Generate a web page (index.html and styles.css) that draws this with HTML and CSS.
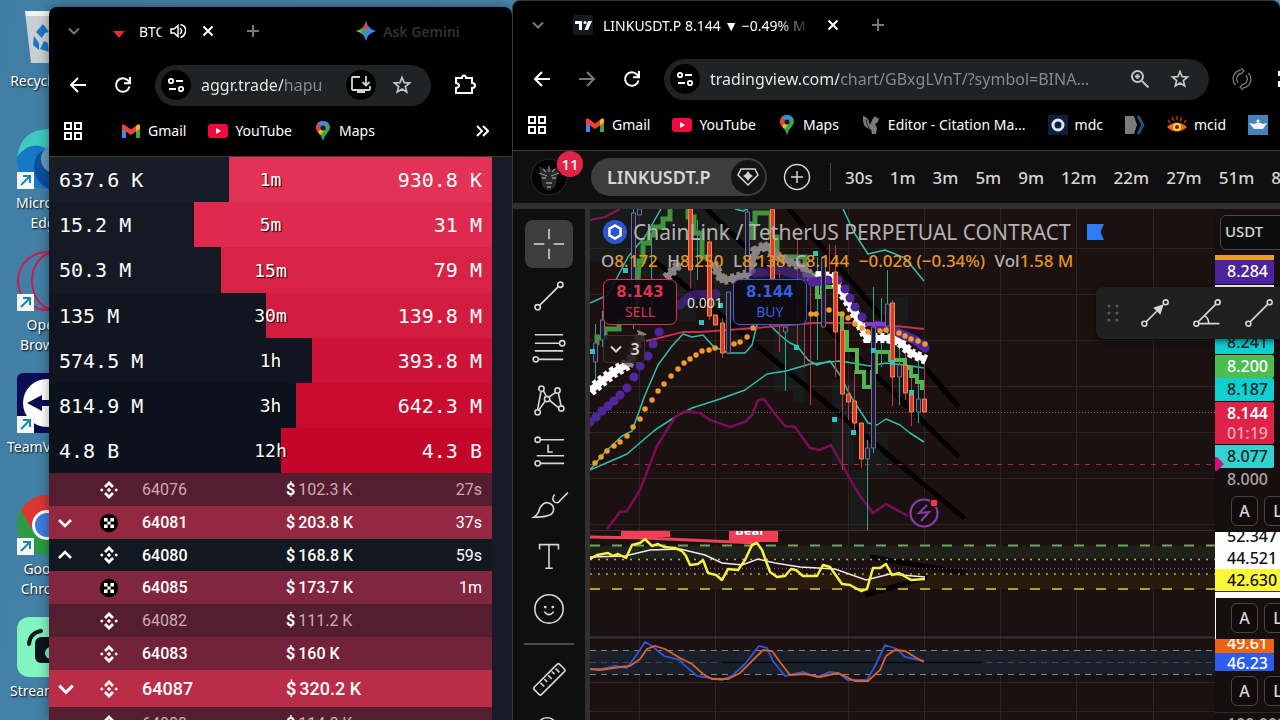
FILE: index.html
```html
<!DOCTYPE html>
<html lang="en">
<head>
<meta charset="utf-8">
<title>Desktop</title>
<link rel="stylesheet" href="styles.css">
</head>
<body>
<svg class="defs" aria-hidden="true">
  <symbol id="chev" viewBox="0 0 16 16"><path d="M3 5.500l5 5 5-5" fill="none" stroke="currentColor" stroke-width="2"/></symbol>
  <symbol id="chev-bold" viewBox="0 0 16 16"><path d="M2 5l6 6 6-6" fill="none" stroke="currentColor" stroke-width="2.600"/></symbol>
  <symbol id="x" viewBox="0 0 16 16"><path d="M3.500 3.500l9 9M12.500 3.500l-9 9" stroke="currentColor" stroke-width="2"/></symbol>
  <symbol id="plus" viewBox="0 0 16 16"><path d="M8 2v12M2 8h12" stroke="currentColor" stroke-width="2"/></symbol>
  <symbol id="back" viewBox="0 0 18 18"><path d="M17 9H3M9 2L2 9l7 7" fill="none" stroke="currentColor" stroke-width="2"/></symbol>
  <symbol id="reload" viewBox="0 0 18 18"><path d="M15.500 10.500A6.800 6.800 0 1 1 14 4.500L16 7M16 1v6.200H10" fill="none" stroke="currentColor" stroke-width="2"/></symbol>
  <symbol id="tune" viewBox="0 0 18 18"><g fill="none" stroke="currentColor" stroke-width="1.800"><circle cx="4" cy="5" r="2.200"/><path d="M9 5h7M2 13h7"/><circle cx="14" cy="13" r="2.200"/></g></symbol>
  <symbol id="star" viewBox="0 0 20 20"><path d="M10 2.500l2.100 5.100 5.500.4-4.200 3.600 1.300 5.400L10 14.100 5.300 17l1.300-5.400L2.400 8l5.500-.4z" fill="none" stroke="currentColor" stroke-width="1.700"/></symbol>
  <symbol id="apps" viewBox="0 0 20 20"><path d="M2 2h6v6H2zM12 2h6v6h-6zM2 12h6v6H2zM12 12h6v6h-6z" fill="none" stroke="currentColor" stroke-width="2"/></symbol>
  <symbol id="gmail" viewBox="0 0 20 16"><path d="M1 3v12h4V6z" fill="#4285f4"/><path d="M15 6v9h4V3z" fill="#34a853"/><path d="M1 3v3l9 6 9-6V3q0-3-3-1l-6 4.500L4 2Q1 0 1 3z" fill="#ea4335"/><path d="M15 3v5.500l4-3V3q-1-3-4 0z" fill="#fbbc04"/></symbol>
  <symbol id="yt" viewBox="0 0 20 16"><rect y="1" width="20" height="14" rx="3" fill="#f0093e"/><path d="M8 5v6l5-3z" fill="#fff"/></symbol>
  <symbol id="maps" viewBox="0 0 14 20"><path d="M7 20Q6 15 2 11 0 9 0 7 0 0 7 0q7 0 7 7 0 2-2 4-4 4-5 9z" fill="#34a853"/><path d="M0 7q0-3 2-5l4 4-4 5Q0 9 0 7z" fill="#ea4335"/><path d="M2 2q5-4 10 0L8 6z" fill="#4285f4"/><path d="M2 11l5-5 2 3-5 5z" fill="#fbbc04"/><circle cx="7" cy="7" r="2.600" fill="#161d3a"/></symbol>
  <symbol id="link" viewBox="0 0 17 17"><path d="M0 0h17v17H0z" fill="#f4f8fa"/><path d="M4 13l8-8M6 4h7v7" fill="none" stroke="#1d87a5" stroke-width="2"/></symbol>
  <symbol id="bnb" viewBox="0 0 20 20"><g fill="currentColor"><path d="M10 1l5 5-2 2-3-3-3 3-2-2zM10 19l5-5-2-2-3 3-3-3-2 2zM10 7.800l2.200 2.200-2.200 2.200L7.800 10zM2.800 8.200L4.600 10l-1.800 1.800L1 10zM17.200 8.200L19 10l-1.800 1.800-1.800-1.800z"/></g></symbol>
  <symbol id="okx" viewBox="0 0 20 20"><circle cx="10" cy="10" r="9.200" fill="#000"/><path d="M5 5h3.600v3.400h2.800V5H15v3.600h-3.400v2.800H15V15h-3.600v-3.400H8.600V15H5v-3.600h3.400V8.600H5z" fill="#fff"/></symbol>
  <symbol id="trend" viewBox="0 0 36 36"><g fill="none" stroke="currentColor" stroke-width="1.800"><path d="M8 28L28 8"/><circle cx="6" cy="30" r="2.800"/><circle cx="30" cy="6" r="2.800"/></g></symbol>
</svg>

<main class="desktop">
  <ul class="shortcuts">
    <li><svg viewBox="0 0 60 60"><path d="M8 4h46l-6 52H14z" fill="#c8d0d4"/><path d="M8 4h46l-1 5H9z" fill="#eef2f3"/><path d="M19 25l7-8 6 8-4 1-3 5zM17 29l-1 9 6 5v-7zM27 34l-4 8 9 3-1-9z" fill="#1879c4"/></svg><span>Recycle Bin</span></li>
    <li><svg viewBox="0 0 60 60"><circle cx="30" cy="30" r="30" fill="#1579c5"/><path d="M0 28Q4 0 32 0q20 0 28 22-6 12-22 4Q16 6 0 28z" fill="#3fc9c0"/><path d="M17 38q0-15 14-18 12 0 16 14L32 60Q18 54 17 38z" fill="#0d4f9e"/><circle cx="38" cy="30" r="14" fill="#6b99bd"/><use href="#link" y="43" width="17" height="17"/></svg><span>Microsoft Edge</span></li>
    <li><svg viewBox="0 0 60 60"><g fill="none" stroke="#c91d52" stroke-width="2"><circle cx="30" cy="30" r="29"/><ellipse cx="36" cy="30" rx="21" ry="28"/></g><use href="#link" y="43" width="17" height="17"/></svg><span>Opera Browser</span></li>
    <li><svg viewBox="0 0 60 60"><rect width="60" height="60" rx="6" fill="#0b0c55"/><circle cx="30" cy="30" r="24" fill="#fff"/><path d="M10 30l15-8v5h12v6H25v5z" fill="#0b0c55"/><use href="#link" y="43" width="17" height="17"/></svg><span>TeamViewer</span></li>
    <li><svg viewBox="0 0 60 60"><circle cx="30" cy="30" r="30" fill="#2c9b43"/><path d="M4 15Q14 0 30 0q20 0 28 18H30L14 33z" fill="#db3632"/><circle cx="30" cy="30" r="15" fill="#fff"/><circle cx="30" cy="30" r="12" fill="#3f7de0"/><use href="#link" y="43" width="17" height="17"/></svg><span>Google Chrome</span></li>
    <li><svg viewBox="0 0 60 60"><rect width="60" height="60" rx="12" fill="#80f5c0"/><path d="M12 27q1-11 12-13" fill="none" stroke="#09161d" stroke-width="4" stroke-linecap="round"/><rect x="18" y="20" width="34" height="26" rx="6" fill="#09161d"/><circle cx="34" cy="36" r="6" fill="#80f5c0"/></svg><span>Streamlabs</span></li>
  </ul>

  <section class="window window-left" aria-label="aggr.trade">
    <header class="tabs">
      <button aria-label="Search tabs" class="dim"><svg class="s16"><use href="#chev"/></svg></button>
      <div class="tab tab-short"><svg class="s16" viewBox="0 0 16 16"><path d="M2 8h12l-6 7z" fill="#e22b35"/></svg><span class="tab-title">BTC</span>
        <button aria-label="Mute tab"><svg class="s16" viewBox="0 0 16 16"><path d="M1 6h3l4-3.500v11L4 10H1z" fill="none" stroke="currentColor" stroke-width="1.500"/><path d="M10 5q3 3 0 6M10.500 1.500q6 1.500 5 7-1 5-5 6" fill="none" stroke="currentColor" stroke-width="1.500"/></svg></button></div>
      <button aria-label="Close tab"><svg class="s16"><use href="#x"/></svg></button>
      <button aria-label="New tab" class="dim newtab"><svg class="s16"><use href="#plus"/></svg></button>
      <button class="gemini"><svg class="s20" viewBox="0 0 20 20"><defs><linearGradient id="gm" x1="0" x2="1"><stop offset="0" stop-color="#f5c400"/><stop offset=".35" stop-color="#3d9d6c"/><stop offset=".55" stop-color="#4285f4"/><stop offset="1" stop-color="#4285f4"/></linearGradient></defs><path d="M10 0q2 8 10 10-8 2-10 10-2-8-10-10 8-2 10-10z" fill="url(#gm)"/><path d="M10 0q.6 5 3 7l-3 2-3-2q2.400-2 3-7z" fill="#ea4335"/></svg>Ask Gemini</button>
    </header>
    <nav class="toolbar">
      <button aria-label="Back"><svg class="s18"><use href="#back"/></svg></button>
      <button aria-label="Reload"><svg class="s18"><use href="#reload"/></svg></button>
      <div class="omnibox"><button class="chip" aria-label="Site information"><svg class="s18"><use href="#tune"/></svg></button>
        <input class="url url-aggr" aria-label="Address" value="aggr.trade/hapu">
        <button class="chip install" aria-label="Install"><svg class="s20" viewBox="0 0 20 20"><path d="M9 2H2q-1 0-1 1v11q0 1 1 1h16q1 0 1-1v-3M15 1v9M11.500 7l3.500 3.500L18.500 7" fill="none" stroke="currentColor" stroke-width="1.800"/><path d="M6 15h8v3H6z" fill="currentColor"/></svg></button>
        <button class="fav" aria-label="Bookmark"><svg class="s20"><use href="#star"/></svg></button></div>
      <button aria-label="Extensions"><svg class="s22" viewBox="0 0 22 22"><path d="M2 4h6q0-2.500 2-2.500T12 4h6v5q3 0 3 2.500T18 14v5H2v-5q3-.5 3-2.500T2 9z" fill="none" stroke="currentColor" stroke-width="2"/></svg></button>
    </nav>
    <nav class="bookmarks">
      <a href="#" aria-label="Apps" class="apps"><svg class="s20"><use href="#apps"/></svg></a>
      <a href="#"><svg class="mark"><use href="#gmail"/></svg>Gmail</a>
      <a href="#"><svg class="mark"><use href="#yt"/></svg>YouTube</a>
      <a href="#"><svg class="pin"><use href="#maps"/></svg>Maps</a>
      <button class="more" aria-label="More bookmarks"><svg class="s14" viewBox="0 0 14 14"><path d="M2 2l5 5-5 5M8 2l5 5-5 5" fill="none" stroke="currentColor" stroke-width="2"/></svg></button>
    </nav>
    <div class="aggr">
      <div class="volumes">
        <div class="vol v1"><i style="width:59.4%"></i><span>637.6 K</span><b>1m</b><span>930.8 K</span></div>
        <div class="vol v2"><i style="width:67.3%"></i><span>15.2 M</span><b>5m</b><span>31 M</span></div>
        <div class="vol v3"><i style="width:61.2%"></i><span>50.3 M</span><b>15m</b><span>79 M</span></div>
        <div class="vol v4"><i style="width:51%"></i><span>135 M</span><b>30m</b><span>139.8 M</span></div>
        <div class="vol v5"><i style="width:40.6%"></i><span>574.5 M</span><b>1h</b><span>393.8 M</span></div>
        <div class="vol v6"><i style="width:44.2%"></i><span>814.9 M</span><b>3h</b><span>642.3 M</span></div>
        <div class="vol v7"><i style="width:47.6%"></i><span>4.8 B</span><b>12h</b><span>4.3 B</span></div>
      </div>
      <table class="trades">
        <colgroup><col class="c-toggle"><col class="c-exchange"><col class="c-price"><col class="c-amount"><col></colgroup>
        <tbody>
        <tr class="t1 faint"><td></td><td><svg class="s20"><use href="#bnb"/></svg></td><td>64076</td><td><b>$</b>102.3 K</td><td>27s</td></tr>
        <tr class="t4"><td><svg class="s16"><use href="#chev-bold"/></svg></td><td><svg class="s20"><use href="#okx"/></svg></td><td>64081</td><td><b>$</b>203.8 K</td><td>37s</td></tr>
        <tr class="t0"><td><svg class="s16 up"><use href="#chev-bold"/></svg></td><td><svg class="s20"><use href="#bnb"/></svg></td><td>64080</td><td><b>$</b>168.8 K</td><td>59s</td></tr>
        <tr class="t3"><td></td><td><svg class="s20"><use href="#okx"/></svg></td><td>64085</td><td><b>$</b>173.7 K</td><td>1m</td></tr>
        <tr class="t1 faint"><td></td><td><svg class="s20"><use href="#bnb"/></svg></td><td>64082</td><td><b>$</b>111.2 K</td><td></td></tr>
        <tr class="t2"><td></td><td><svg class="s20"><use href="#bnb"/></svg></td><td>64083</td><td><b>$</b>160 K</td><td></td></tr>
        <tr class="t5"><td><svg class="s18"><use href="#chev-bold"/></svg></td><td><svg class="s20"><use href="#bnb"/></svg></td><td>64087</td><td><b>$</b>320.2 K</td><td></td></tr>
        <tr class="t1 faint"><td></td><td><svg class="s20"><use href="#bnb"/></svg></td><td>64080</td><td><b>$</b>114.8 K</td><td></td></tr>
        </tbody>
      </table>
    </div>
  </section>

  <section class="window window-right" aria-label="TradingView">
    <header class="tabs">
      <button aria-label="Search tabs" class="dim"><svg class="s16"><use href="#chev"/></svg></button>
      <div class="tab tab-long"><svg class="s20" viewBox="0 0 20 20"><rect width="20" height="20" rx="2" fill="#15171e"/><path d="M2 6h7v9H6V9H2zM15 6h4l-4 9h-3.500z" fill="#fff"/><circle cx="12" cy="7.500" r="1.600" fill="#fff"/></svg><span class="tab-title">LINKUSDT.P 8.144 ▼ −0.49% M</span></div>
      <button aria-label="Close tab"><svg class="s16"><use href="#x"/></svg></button>
      <button aria-label="New tab" class="dim newtab"><svg class="s16"><use href="#plus"/></svg></button>
    </header>
    <nav class="toolbar">
      <button aria-label="Back"><svg class="s18"><use href="#back"/></svg></button>
      <button aria-label="Forward" class="dim"><svg class="s18 flip"><use href="#back"/></svg></button>
      <button aria-label="Reload"><svg class="s18"><use href="#reload"/></svg></button>
      <div class="omnibox"><button class="chip" aria-label="Site information"><svg class="s18"><use href="#tune"/></svg></button>
        <input class="url url-tv" aria-label="Address" value="tradingview.com/chart/GBxgLVnT/?symbol=BINA...">
        <button class="fav" aria-label="Zoom"><svg class="s20" viewBox="0 0 20 20"><g fill="none" stroke="currentColor" stroke-width="2"><circle cx="7.500" cy="7.500" r="5.500"/><path d="M12 12l6.500 6.500M7.500 5v5M5 7.500h5"/></g></svg></button>
        <button class="fav" aria-label="Bookmark"><svg class="s20"><use href="#star"/></svg></button></div>
      <button aria-label="Sync" class="dim"><svg class="s22" viewBox="0 0 22 22"><g fill="none" stroke="currentColor" stroke-width="1.300"><path d="M10 2a9 9 0 0 0-5.500 15M12 20a9 9 0 0 0 5.500-15M10 5.500a5.500 5.500 0 0 0-3 9M12 16.500a5.500 5.500 0 0 0 3-9M10 0l3 3-3 3M12 22l-3-3 3-3"/></g></svg></button>
      <button aria-label="Extensions"><svg class="s22" viewBox="0 0 22 22"><path d="M0 3h8v5H0zM0 13h8v6H0z" fill="currentColor"/></svg></button>
    </nav>
    <nav class="bookmarks">
      <a href="#" aria-label="Apps" class="apps"><svg class="s20"><use href="#apps"/></svg></a>
      <a href="#"><svg class="mark"><use href="#gmail"/></svg>Gmail</a>
      <a href="#"><svg class="mark"><use href="#yt"/></svg>YouTube</a>
      <a href="#"><svg class="pin"><use href="#maps"/></svg>Maps</a>
      <a href="#"><svg class="s20" viewBox="0 0 20 20"><path d="M2 1q6 1 7 9l2-5 3-4 2 2 2 0-1 4-3 2 2 4-1 6h-4l-1-4-2-1Q1 12 2 1z" fill="#777a7c"/><path d="M5 4q1 8 5 11" stroke="#202224" fill="none"/></svg>Editor - Citation Ma...</a>
      <a href="#"><svg class="s20" viewBox="0 0 20 20"><path d="M0 0h20v20H0z" fill="#0c1f3d"/><circle cx="10" cy="10" r="5" fill="none" stroke="#dbe6f2" stroke-width="3"/></svg>mdc</a>
      <a href="#" aria-label="Bookmark"><svg class="s20" viewBox="0 0 20 20"><path d="M0 1h9l3 9-3 9H0z" fill="#7b7b7d"/><path d="M13 1l5 9-5 9" fill="none" stroke="#204f7c" stroke-width="3"/></svg></a>
      <a href="#"><svg class="s20" viewBox="0 0 20 20"><path d="M0 12q10-9 20 0-10 9-20 0z" fill="#ef6a1c"/><circle cx="10" cy="12" r="4" fill="#ffd34d"/><circle cx="10" cy="12" r="2" fill="#7b1b10"/><path d="M3 8L1 5M7 6L5 2M10 5V1M13 6l2-4M17 8l2-3" stroke="#b52a1e" stroke-width="1.600"/></svg>mcid</a>
      <a href="#" aria-label="Bookmark"><svg class="s20" viewBox="0 0 20 20"><path d="M0 0h20v20H0z" fill="#4583bb"/><path d="M1 8l5 1q4-3 9 0l4-1-4 6H6z" fill="#f1f5f8"/><circle cx="10" cy="6" r="1.500" fill="#fff"/></svg></a>
    </nav>
    <div class="tv">
      <header class="tv-head">
        <button class="avatar" aria-label="Account"><svg viewBox="0 0 38 38"><circle cx="19" cy="19" r="18" fill="#030303" stroke="#2a2a2a"/><path d="M9 8l5 3h10l5-3-1 9-3 12-6 4-6-4-3-12z" fill="#26282a"/><path d="M9 15l8 3M29 15l-8 3M12 20h4M22 20h4M16 25h6M17 29h4M13 11l3 3M25 11l-3 3M19 8v6" stroke="#8a8d8f" stroke-width="1.300"/></svg><span class="badge">11</span></button>
        <button class="symbol">LINKUSDT.P<svg viewBox="0 0 34 34"><circle cx="17" cy="17" r="17" fill="#141414"/><path d="M7 15l3-6h14l3 6-10 10z" fill="none" stroke="currentColor" stroke-width="1.500"/><path d="M17 11l2 3 3 2-3 2-2 3-2-3-3-2 3-2z" fill="currentColor"/></svg></button>
        <button class="compare" aria-label="Compare"><svg viewBox="0 0 28 28"><g fill="none" stroke="currentColor" stroke-width="1.500"><circle cx="14" cy="14" r="12.500"/><path d="M14 8v12M8 14h12"/></g></svg></button>
        <div class="frames"><button>30s</button><button>1m</button><button>3m</button><button>5m</button><button>9m</button><button>12m</button><button>22m</button><button>27m</button><button>51m</button><button>81m</button></div>
      </header>
      <div class="tv-main">
        <div class="tools">
          <button class="active" aria-label="Cross"><svg viewBox="0 0 36 36"><path d="M18 2v11M18 23v11M2 18h11M23 18h11" stroke="currentColor" stroke-width="1.600"/></svg></button>
          <button aria-label="Trend line"><svg><use href="#trend"/></svg></button>
          <button aria-label="Fib retracement"><svg viewBox="0 0 36 36"><g fill="none" stroke="currentColor" stroke-width="1.700"><path d="M3 4h30M3 13h26M3 21h30M7 30h26"/><circle cx="32" cy="13" r="2.800"/><circle cx="4" cy="30" r="2.800"/></g></svg></button>
          <button aria-label="Patterns"><svg viewBox="0 0 36 36"><g fill="none" stroke="currentColor" stroke-width="1.700"><path d="M6 28L9.500 9M12 8l3 6M18 15l7-5M28 11l3 14M28 26l-10-8M14 19L7 29"/><circle cx="10" cy="6" r="2.800"/><circle cx="27" cy="8" r="2.800"/><circle cx="16" cy="17" r="2.800"/><circle cx="6" cy="31" r="2.800"/><circle cx="31" cy="27" r="2.800"/></g></svg></button>
          <button aria-label="Positions"><svg viewBox="0 0 36 36"><g fill="none" stroke="currentColor" stroke-width="1.700"><path d="M9 5h25M5 22h29M9 30h25M17 10v8h5"/><circle cx="6" cy="5" r="2.800"/><circle cx="6" cy="30" r="2.800"/></g></svg></button>
          <button aria-label="Brush"><svg viewBox="0 0 36 36"><g fill="none" stroke="currentColor" stroke-width="1.700"><path d="M2 32q5-3 6-9 4-8 10-6 7 3 4 10-3 5-20 5zM24 8q-4 5 0 8 4 2 6-2l8-8"/></g></svg></button>
          <button aria-label="Text"><svg viewBox="0 0 36 36"><path d="M8 11V6h20v5M18 6v25M14 31h8" fill="none" stroke="currentColor" stroke-width="1.700"/></svg></button>
          <button aria-label="Emoji"><svg viewBox="0 0 36 36"><g fill="none" stroke="currentColor" stroke-width="1.700"><circle cx="18" cy="19" r="15"/><path d="M13 22q5 6 10 0"/></g><circle cx="14" cy="17" r="1.500" fill="currentColor"/><circle cx="22" cy="17" r="1.500" fill="currentColor"/></svg></button>
          <hr>
          <button aria-label="Measure"><svg viewBox="0 0 36 36"><g fill="none" stroke="currentColor" stroke-width="1.700"><rect x="-1" y="13" width="38" height="11" rx="2" transform="rotate(-45 18 18)"/><path d="M9 22l4 4M13 18l3 3M17 14l4 4M21 10l3 3M25 7l4 4"/></g></svg></button>
          <button aria-label="Zoom in"><svg viewBox="0 0 36 36"><circle cx="16" cy="15" r="11" fill="none" stroke="currentColor" stroke-width="1.700"/></svg></button>
        </div>
        <div class="chart">
          <svg class="plot" viewBox="590 209 625 511" preserveAspectRatio="xMinYMin slice" role="img" aria-label="LINKUSDT price chart">
            <defs><clipPath id="pane"><path d="M590 531h625v106H590z"/></clipPath></defs>
            <g fill="#191b1a"><path d="M590 209h184v52H590zM630 261h24v60h-24zM660 261h36v60h-36zM714 261h56v60h-56zM774 261h28v130h-28zM793 280h12v122h-12zM832 380h22v85h-22zM850 470h15v60h-15zM883 297h25v70h-25zM868 432h20v40h-20z"/></g>
            <path d="M639.500 209v511M715.500 209v511M848.500 209v511M924.500 209v511M1000.500 209v511M1076.500 209v511M1153.500 209v511M590 248.500h625M590 294.500h625M590 340.500h625M590 386.500h625M590 432.500h625M590 478.500h625M590 524.500h625M590 583.500h625M590 682.500h625M590 711.500h625" stroke="#2b2424"/>
            <g stroke="#030202" stroke-width="5" stroke-linecap="round"><path d="M790 210L957 405M708 210L957 455M655 261L963 517"/></g>
            <path d="M590 412.500h625" stroke="#6b6260" stroke-dasharray="1 2"/>
            <path d="M590 464.500h625" stroke="#b01f58" stroke-dasharray="5 6"/>
            <g fill="none" stroke="#2fbfae" stroke-width="1.500" stroke-linejoin="round">
              <path d="M590 303l18-8 20-38 18-22 15-26M735 209l8 2 4-2M843 209l12 25 13 20 17-4 20 8 19 23"/>
              <path d="M590 470l15-18 17-16 10-5 13-36 13-30 14-19 11-12 9 3 11-2 10 11 15 7h17l7-8 5-20M770 325l10 10 10 8 7 3 11 14 9 5 13-4 10 14 10 20 18 28 9 2 9-6 14 6 10 8 14 9"/>
              <path d="M590 470l37-16 28-24 20-13 17-9 28-9 25-9 22-16 19-3 24-7 30-3 30 5 16-3 19 2 19 3"/>
            </g>
            <path d="M590 220l15-3 15-8" fill="none" stroke="#8d1658" stroke-width="2"/>
            <path d="M646 341l17-4 20-5h17l56-4 56-5 55 0 57 6" fill="none" stroke="#c92f55" stroke-width="1.800"/>
            <path d="M607 529l13-17 7-1 13-21 17-44 18-29 10-6 15 2 10 7 20 7 15-5 7-7 6-15 6-1 11 15 10 12 10 1 15 21 10 2 11-5 14 25 13 23 15 20 13-9 9 5 13 7" fill="none" stroke="#7d0b57" stroke-width="2.500"/>
            <g stroke="#bd3354"><path d="M690.500 209v80M709.500 230v90M722.500 318v40M772.500 209v80M779.500 270v82M797.500 240v106M804.500 277v91M810.500 277v128M829.500 244v40M835.500 245v132M842.500 330v140M848.500 385v35M854.500 370v60M861.500 423v45M892.500 300v106M905.500 352v48M911.500 367v59M924.500 363v49"/></g>
            <g stroke="#24a88d"><path d="M595.500 324v57M602.500 311v36M633.500 209v120M651.500 235v80M697.500 220v60M747.500 209v68M785.500 327v64M817.500 257v103M867.500 440v90M873.500 287v166M881.500 298v69M887.500 270v65M899.500 333v72M918.500 360v63"/></g>
            <g fill="none" stroke="#43933d" stroke-width="5"><path d="M597 345v-8h8v-8h14v-7h17l3-61h4v-18h6v-8h5v-8h9v-8h7v-14h18v12h6v16h8v24h8M752 240v-16h3v-11h16v24h6v20h28v18h12"/></g>
            <path d="M817 275v22h5v-10h13V314h7v18h5v18h10v22h7v15h8v-15h4v-20h14v8h15v8h6v8h6v6h5v8" fill="none" stroke="#50b84a" stroke-width="4"/>
            <g fill="none" stroke="#fff"><path d="M590 391l12-10 12-9 14-8" stroke-width="7"/><path d="M590 391l12-10 12-9 14-8" stroke-width="12" stroke-dasharray="4 3"/><path d="M812 280l6-4 14 1 18 28 17 33h20l12 3 12 12 15 7" stroke-width="6"/><path d="M812 280l6-4 14 1 18 28 17 33h20l12 3 12 12 15 7" stroke-width="10" stroke-dasharray="4 3"/></g>
            <g fill="none" stroke="#8a8283"><path d="M628 366l14-34M666 278l14-15M713 263l9 17 14-2 14-5 5-22 11-6 9 10 15 7 15 6 7 12" stroke-width="6"/><path d="M628 366l14-34M666 278l14-15M713 263l9 17 14-2 14-5 5-22 11-6 9 10 15 7 15 6 7 12" stroke-width="10" stroke-dasharray="4 3"/></g>
            <g fill="none" stroke="#50269c" stroke-linecap="round" stroke-width="9"><path d="M590 422h.1M596 417h.1M602 411h.1M608 406h.1M614 401h.1M620 395h.1M627 388h.1M634 377h.1M640 366h.1M648 356h.1M653 344h.1M659 332h.1M838 280h.1M845 289h.1M850 298h.1M855 307h.1M862 317h.1M812 282l16-2M876 325l12 2 13 7 14 6 10 8"/><path d="M680 305l12-10 24-1M755 273l25-3 30 8" opacity=".6"/></g>
            <path d="M865 324h30" stroke="#8c39c4" stroke-width="4"/>
            <g fill="none" stroke="#f19a2c" stroke-width="5.400" stroke-linecap="round"><path d="M595 463h.1M601 457h.1M607 451h.1M614 446h.1M620 442h.1M627 436h.1M633 427h.1M640 419h.1M645 409h.1M652 400h.1M658 391h.1M664 384h.1M671 376h.1M678 369h.1M684 363h.1M690 359h.1M696 355h.1M702 351h.1M709 350h.1M715 348h.1M734 344h.1M740 342h.1M747 337h.1M753 328h.1M811 314h.1M816 314h.1M829 310h.1M836 313h.1M842 314h.1M848 318h.1M855 324h.1M862 328h.1M868 332h.1M880 331h.1M886 330h.1M899 333h.1M905 336h.1M911 339h.1M918 341h.1M925 344h.1"/></g>
            <g fill="#d93a35" stroke="#ee9136"><path d="M688.500 209h4v61h-4zM707.500 242h4v74h-4zM713.500 315h4v10h-4zM720.500 323h4v30h-4zM770.500 209h4v71h-4zM833.500 272h4v60h-4zM840.500 330h4v64h-4zM846.500 394h4v8h-4zM852.500 401h4v22h-4zM859.500 423h4v36h-4zM890.500 303h4v74h-4zM903.500 365h4v28h-4zM909.500 395h4v17h-4zM922.500 399h4v13h-4z"/></g>
            <g fill="#1d1a2e" stroke="#706c9c"><path d="M593.500 343h4v19h-4zM600.500 320h4v20h-4zM631.500 213h4v110h-4zM637.500 209h4v6h-4zM726.500 292h4v61h-4zM745.500 212h4v61h-4zM783.500 327h4v5h-4zM821.500 257h4v70h-4zM865.500 448h4v11h-4zM871.500 327h4v121h-4zM885.500 304h4v22h-4zM897.500 365h4v12h-4zM916.500 399h4v13h-4z"/></g>
            <path d="M590 349h5v5h-5zM699 320h5v5h-5zM718 303h5v5h-5zM623 268h5v5h-5zM794 345h5v5h-5zM832 417h5v5h-5zM851 430h5v5h-5zM871 348h5v5h-5zM890 360h5v5h-5zM909 390h5v5h-5zM813 251h5v5h-5z" fill="#2ac4c4"/>
            <g fill="none" stroke="#8c3ca3" stroke-width="2.200"><circle cx="924" cy="513" r="13.500" fill="#1a1014"/><path d="M927 505l-8 8 10-1-8 9" stroke-width="2"/></g><circle cx="934" cy="503" r="4" fill="#f23645" stroke="#1c1214"/>

            <path d="M590 546h625v13H590z" fill="#1f211b"/><path d="M590 574h625v15H590z" fill="#281b0e"/>
            <path d="M870 557l95 16M865 595l62-18" fill="none" stroke="#060403" stroke-width="5"/>
            <g stroke-width="1.500"><path d="M590 545.500h625" stroke="#6fa35f" stroke-width="2" stroke-dasharray="10 12"/><path d="M590 559.500h625" stroke="#a6ad7c" stroke-dasharray="2 6"/><path d="M590 568.500h625" stroke="#76508a" stroke-dasharray="1 3"/><path d="M590 574h625" stroke="#b9a242" stroke-dasharray="2 6"/><path d="M590 589h625" stroke="#aaa323" stroke-width="2" stroke-dasharray="10 12"/></g>
            <path d="M590 530.500h625" stroke="#37313a"/>
            <g clip-path="url(#pane)"><path d="M590 537l55 1 112 5" fill="none" stroke="#ee4257" stroke-width="3"/><path d="M621 525h49v12h-49zM729 525h49v17h-49z" fill="#f23e54"/><text x="735" y="535" class="bear">Bear</text></g>
            <path d="M590 557l35-1 25-6 30-1 25 6 17 8 20 2 16-6 17 4 25 4 35 2 31 11 24-6 35 3" fill="none" stroke="#f2e9ec" stroke-width="1.500"/>
            <path d="M590 559l7-4 11-2 5 3 5-2 8 4 6-13 8-2 5-4 7 7 6-2 6 3 11 1 7 3 4 5 4 9 8-1 5-4 5 13 8 2 6 5 6-11 10 1 7-10 7-15 5-2 5 7 8 22 7 5 8-1 6-7 5 1 7 6h14l6-11 7 2 12 17 8 1 11 6 6-2 6-21h7l6-4 6 11 7-2 12 7 14-1" fill="none" stroke="#f7f13f" stroke-width="2.500" stroke-linejoin="round"/>

            <path d="M590 650h625v24H590z" fill="#1a202a"/>
            <path d="M590 637.500h625" stroke="#35323d" stroke-width="2"/>
            <g stroke="#7c8486"><path d="M590 650.500h625M590 674.500h625" stroke-dasharray="6 5"/><path d="M590 662.500h625" stroke="#40484a" stroke-dasharray="6 5"/></g><path d="M722 662.500h260" stroke="#06090c" stroke-width="1.500"/>
            <g fill="none" stroke-width="1.800"><path d="M590 669h12l13-3 12 2 13-18 5-8 7 4 12 10 16 4 3 4 14 12 25 4 11-5 12-11 14-18 8 2 6 13 12 15 18-4 14 5 13-5 8 1 10 7h19l8-14 10-21 12 4 8 8 19 4" stroke="#2d58da"/><path d="M590 669l10 1 20-3 10-1 10-7 7-10 8-3 10 3 15 9 12 6 11 10 9 5h16l12-6 12-12 11-11 9 1 8 11 10 13 15-1 15 3 18-4 17 8h13l12-11 6-14 9-6 10 1 10 6 9 5" stroke="#dc612b"/></g>
          </svg>
          <div class="legend">
            <div class="legend-title"><svg viewBox="0 0 24 24"><circle cx="12" cy="12" r="12" fill="#2b56ce"/><path d="M12 5.500l5.600 3.200v6.600L12 18.500l-5.600-3.200V8.700z" fill="none" stroke="#fff" stroke-width="2.500"/></svg><h1>ChainLink / TetherUS PERPETUAL CONTRACT</h1><svg class="flag" viewBox="0 0 18 18"><path d="M0 1h17l-3.500 8L17 17H0z" fill="#2f7bf6"/></svg></div>
            <p class="ohlc">O<em>8.172</em> H<em>8.250</em> L<em>8.138</em> C<em>8.144</em> <em>−0.028 (−0.34%)</em> <span>Vol</span><em>1.58 M</em></p>
            <div class="order"><button class="sell"><b>8.143</b>SELL</button><span>0.001</span><button class="buy"><b>8.144</b>BUY</button></div>
            <button class="collapse"><svg class="s16"><use href="#chev"/></svg>3</button>
          </div>
        </div>
        <div class="axis">
          <select aria-label="Currency" class="currency"><option>USDT</option></select>
          <div class="p-line orange"></div>
          <div class="p-tag purple">8.284</div>
          <div class="p-line white"></div>
          <div class="p-tag cyan behind">8.241</div>
          <div class="p-tag green">8.200</div>
          <div class="p-tag cyan">8.187</div>
          <div class="p-tag red">8.144<small>01:19</small></div>
          <div class="p-tag teal">8.077</div>
          <div class="p-tag plain">8.000</div>
          <div class="scale"><button>A</button><button>L</button></div>
          <div class="osc">
            <div class="clip"><span>52.347</span></div>
            <div class="mid">44.521</div>
            <div class="yellow">42.630</div>
          </div>
          <div class="scale osc-scale"><button>A</button><button>L</button></div>
          <div class="stoch"><div class="clip"><span>49.61</span></div><div class="p-tag blue">46.23</div></div>
          <div class="scale"><button>A</button><button>L</button></div>
          <div class="last">100.000</div>
        </div>
        <svg class="marker" viewBox="0 0 9 14"><path d="M0 0h2l7 7-7 7H0z" fill="#d30f79"/></svg>
        <div class="favbar" role="toolbar" aria-label="Favourite tools">
          <svg class="grip" viewBox="0 0 12 18"><g fill="#5a5a5a"><circle cx="2" cy="2" r="1.500"/><circle cx="10" cy="2" r="1.500"/><circle cx="2" cy="9" r="1.500"/><circle cx="10" cy="9" r="1.500"/><circle cx="2" cy="16" r="1.500"/><circle cx="10" cy="16" r="1.500"/></g></svg>
          <button aria-label="Arrow"><svg viewBox="0 0 36 36"><g fill="none" stroke="currentColor" stroke-width="1.800"><path d="M8 28l12-12"/><circle cx="6" cy="30" r="2.800"/><circle cx="30" cy="6" r="2.800"/></g><path d="M28 8l-4 12-8-8z" fill="currentColor"/></svg></button>
          <button aria-label="Trend angle"><svg viewBox="0 0 36 36"><g fill="none" stroke="currentColor" stroke-width="1.800"><path d="M8 28L28 8M9 30h23M15 21q5 3 5 9"/><circle cx="6" cy="30" r="2.800"/><circle cx="30" cy="6" r="2.800"/></g></svg></button>
          <button aria-label="Line"><svg><use href="#trend"/></svg></button>
        </div>
      </div>
    </div>
  </section>
</main>
</body>
</html>
```
FILE: styles.css
```css
* { box-sizing: border-box; }
body { margin: 0; background: #4686ab; color: #fff; font-family: "Noto Sans", "Open Sans", sans-serif; font-size: 14px; }
button, input, select { font: inherit; color: inherit; background: none; border: 0; padding: 0; margin: 0; }
button { display: flex; align-items: center; justify-content: center; flex: none; }
a { color: inherit; text-decoration: none; }
svg { display: block; flex: none; }
.defs { position: absolute; width: 0; height: 0; }
.s14 { width: 14px; height: 14px; }
.s16 { width: 16px; height: 16px; }
.s18 { width: 18px; height: 18px; }
.s20 { width: 20px; height: 20px; }
.s22 { width: 22px; height: 22px; }
.dim { color: #777; }
.flip { transform: scaleX(-1); }

.desktop { position: relative; height: 100vh; min-height: 480px; overflow: hidden; background: linear-gradient(100deg, #417ea5, #5690b2); }
.shortcuts { list-style: none; margin: 0; padding: 7px 0 0; width: 94px; }
.shortcuts li { height: 122px; display: flex; flex-direction: column; align-items: center; text-align: center; gap: 4px; line-height: 20px; text-shadow: 1px 1px 2px #000; }
.shortcuts svg { width: 60px; height: 60px; }
.shortcuts span { width: 84px; }

/* Browser windows */
.window { position: absolute; bottom: 0; background: #000; border-radius: 8px 8px 0 0; overflow: hidden; display: flex; flex-direction: column; }
.window-left { left: 49px; top: 7px; width: 463px; box-shadow: 0 0 12px #0006; }
.window-right { left: 512px; top: 0; right: 0; border: 1px solid #343a3d; border-width: 1px 0 0 1px; }
.tabs { height: 48px; flex: none; display: flex; align-items: center; padding-left: 17px; }
.tab { display: flex; align-items: center; }
.tab-title { white-space: nowrap; overflow: hidden; mask-image: linear-gradient(90deg, #000 85%, transparent); }
.tab-short { margin: 0 14px 0 29px; gap: 7px; }
.tab-short .tab-title { margin-left: 5px; width: 24px; }
.tab-long { margin: 0 15px 0 27px; gap: 10px; }
.tab-long .tab-title { width: 207px; }
.newtab { margin-left: 29px; }
.gemini { margin-left: 95px; gap: 7px; color: #303133; font-weight: 600; }
.toolbar { height: 60px; flex: none; display: flex; align-items: center; gap: 27px; padding-left: 20px; }
.omnibox { flex: 1 1 auto; min-width: 0; height: 41px; border-radius: 21px; background: #1f2323; display: flex; align-items: center; gap: 12px; padding: 0 19px 0 6px; }
.window-left .omnibox { flex: 0 0 276px; margin-left: -4px; gap: 10px; }
.window-left .omnibox + button { margin-left: -4px; }
.window-right .omnibox { margin-left: -4px; flex: 0 0 545px; gap: 20px; }
.window-right .omnibox .url { margin-left: -10px; }
.window-right .omnibox + button { margin-left: -5px; }
.window-right .omnibox + button + button { margin-left: -2px; }
.chip { width: 30px; height: 30px; border-radius: 50%; background: #000; }
.install { margin-right: 6px; color: #d2d4d4; }
.fav { color: #c4c6c6; }
.url { flex: 1; min-width: 0; font-size: 16px; color: transparent; background-clip: text; -webkit-background-clip: text; outline: 0; }
.url-aggr { background-image: linear-gradient(90deg, #f1f1f1 82px, #8a8d8d 82px); }
.url-tv { background-image: linear-gradient(90deg, #f1f1f1 129px, #8a8d8d 129px); }
.bookmarks { height: 42px; padding: 0 0 10px 14px; flex: none; display: flex; align-items: center; gap: 22px; border-bottom: 1px solid #3a3c3c; white-space: nowrap; }
.bookmarks a { display: flex; align-items: center; gap: 7px; flex: none; }
.bookmarks .apps { margin-right: 16px; }
.mark { width: 20px; height: 16px; }
.pin { width: 18px; height: 20px; }
.more { margin-left: 78px; }

/* Liquidation feed */
.aggr { flex: 1; min-height: 0; overflow: hidden; background: #171b25; padding-right: 20px; font-family: Roboto, sans-serif; }
.vol { position: relative; height: 45px; display: grid; grid-template-columns: 1fr auto 1fr; align-items: center; padding: 0 10px; font: 20px "DejaVu Sans Mono", monospace; background: #181c26; }
.vol span, .vol b { position: relative; }
.vol span:last-child { text-align: right; }
.vol b { font-weight: 400; font-size: 18px; text-shadow: 1px 1px 1px #000; }
.vol i { position: absolute; right: 0; top: 0; bottom: 0; background: #e23256; }
.v2 i { background: #dd2a4e; }
.v3 i { background: #d72346; }
.v4 i { background: #d21d40; }
.v5 i { background: #cd1438; }
.v6 i { background: #c90c30; }
.v7 i { background: #c40629; }
.v2, .v3 { background: #151923; }
.v4, .v5 { background: #11151f; }
.v6, .v7 { background: #0c121b; }
.vol.v3 { height: 46px; }
.trades { width: 100%; table-layout: fixed; border-collapse: collapse; font-size: 16px; font-weight: 500; }
.c-toggle { width: 40px; }
.c-exchange { width: 53px; }
.c-price { width: 144px; }
.c-amount { width: 110px; }
.trades tr { height: 33px; }
.trades td { padding: 0; white-space: nowrap; }
.trades td:first-child { padding-left: 8px; }
.trades td:nth-child(2) { padding-left: 10px; }
.trades td:last-child { text-align: right; padding-right: 10px; font-weight: 400; }
.trades td b { margin-right: 3px; color: #fff; }
.faint { color: #cfa9b4; font-weight: 400; }
.faint svg { color: #fff; }
.up { transform: rotate(180deg); }
.t0 { background: #111820; }
.t1 { background: #541e30; }
.t2 { background: #732339; }
.t3 { background: #802640; }
.t4 { background: #942841; }
.t5 { background: #b92d49; font-size: 18px; }
.trades .t0 { height: 32px; }
.trades .t5 { height: 37px; }

/* Charting app */
.tv { flex: 1; min-height: 0; display: flex; flex-direction: column; background: #0f0f0f; color: #d6d6d6; }
.tv-head { height: 58px; flex: none; display: flex; align-items: center; padding-left: 17px; border-bottom: 6px solid #303030; overflow: hidden; }
.avatar { position: relative; }
.avatar svg { width: 38px; height: 38px; }
.badge { position: absolute; left: 27px; top: -7px; width: 26px; height: 26px; border-radius: 50%; background: #e12347; color: #fff; font-size: 15px; line-height: 26px; font-weight: 500; }
.symbol { margin-left: 23px; width: 176px; height: 38px; border-radius: 19px; background: #3d3d3d; font-size: 18px; font-weight: 600; justify-content: space-between; padding: 0 2px 0 16px; }
.symbol svg { width: 34px; height: 34px; }
.compare { margin-left: 16px; padding-right: 19px; border-right: 1px solid #444; }
.compare svg { width: 28px; height: 28px; }
.frames { display: flex; gap: 17px; margin-left: 14px; font-size: 17px; font-weight: 500; }
.tv-main { position: relative; flex: 1; min-height: 0; display: flex; overflow: hidden; }
.tools { width: 77px; flex: none; border-right: 5px solid #303030; display: flex; flex-direction: column; align-items: center; gap: 4px; padding-top: 11px; overflow: hidden; }
.tools button { width: 48px; height: 48px; border-radius: 8px; }
.tools svg { width: 34px; height: 34px; overflow: visible; }
.tools .active { background: #3d3d3d; }
.tools hr { width: 50px; height: 2px; border: 0; background: #4a4a4a; margin: 7px 0 6px; flex: none; }
.chart { position: relative; flex: 1; min-width: 0; background: #1b1111; }
.plot { position: absolute; width: 100%; height: 100%; }
.bear { font: 700 13px "Noto Sans", sans-serif; fill: #fff; }
.legend { position: relative; padding: 10px 0 10px 13px; display: flex; flex-direction: column; align-items: flex-start; }
.legend-title { display: flex; align-items: center; gap: 6px; height: 26px; white-space: nowrap; }
.legend-title svg { width: 24px; height: 24px; }
.legend-title .flag { width: 18px; height: 18px; margin-left: 10px; }
h1 { margin: 0; font-size: 21px; font-weight: 400; color: #b5b1b1; line-height: 26px; }
.ohlc { margin: 5px 0 7px -2px; line-height: 22px; font-size: 17px; font-weight: 500; color: #b5b1b1; white-space: nowrap; }
.ohlc em { font-style: normal; color: #e19624; margin-right: 5px; }
.order { display: flex; align-items: center; gap: 10px; color: #ddd; font-size: 14px; }
.order button { width: 74px; height: 46px; flex-direction: column; border: 1px solid; border-radius: 7px; background: #0d0a10e8; line-height: 19px; }
.order b { font-family: "DejaVu Sans", sans-serif; font-size: 15px; }
.order .sell { color: #dd3251; }
.order .buy { color: #345fe0; }
.collapse { margin-top: 10px; width: 42px; height: 28px; gap: 6px; border: 1px solid #3b3333; border-radius: 4px; background: #1d1514d0; font-size: 16px; font-weight: 600; }

.axis { width: 65px; flex: none; background: #170e0f; font-size: 16px; font-weight: 500; overflow: hidden; padding-top: 6px; }
.currency { appearance: none; width: 72px; height: 35px; margin-left: 5px; border: 1px solid #464646; border-radius: 6px; background: #0d0d0d; padding: 0 0 3px 4px; font-size: 15px; }
.p-line { width: 59px; height: 5px; margin-top: 5px; }
.p-line.white { height: 3px; margin-top: 1px; background: #fff; }
.orange { background: #ee9a20; }
.p-tag { width: 59px; height: 23px; line-height: 23px; padding-left: 12px; border-radius: 0 2px 2px 0; color: #fff; }
.purple { background: #4c239c; height: 24px; }
.cyan, .teal { background: #12cfcf; color: #0b2424; }
.teal { background: #31d2cf; }
.behind { margin-top: 43px; }
.green { background: #4dbd52; margin-top: 1px; }
.red { background: #dd2348; height: 42px; line-height: 20px; padding-top: 1px; margin: 1px 0; font-weight: 600; }
.red small { display: block; font-size: 16px; color: #f0a9b8; font-weight: 500; line-height: 20px; }
.plain { color: #aaa5a5; }
.scale { display: flex; gap: 6px; padding: 5px 0 6px 16px; }
.scale button { width: 27px; height: 30px; border: 1px solid #4b4444; border-radius: 6px; background: #110b0b; }
.osc { background: #fff; color: #111; line-height: 22px; }
.osc div { padding-left: 12px; }
.clip { height: 15px; overflow: hidden; display: flex; align-items: flex-end; }
.osc .yellow { background: #fcf838; border-bottom: 1px solid #333; height: 23px; }
.osc-scale { border-top: 6px solid #fff; border-left: 1px solid #fff; padding: 5px 0 6px 15px; }
.stoch { color: #fff; width: 59px; }
.stoch .clip { background: #ea650e; padding-left: 12px; height: 14px; line-height: 19px; }
.blue { background: #2c5cf0; height: 18px; line-height: 20px; }
.last { border-top: 1px solid #332b2b; padding-left: 12px; color: #aaa; }
.marker { position: absolute; right: 56px; top: 248px; width: 9px; height: 14px; }
.favbar { position: absolute; right: 0; top: 78px; height: 52px; width: 184px; display: flex; align-items: center; gap: 20px; padding-left: 11px; background: #202020; border-radius: 8px 0 0 8px; box-shadow: 0 2px 6px #0009; overflow: hidden; }
.favbar button svg { width: 32px; height: 32px; }
.grip { width: 12px; height: 18px; }
```
